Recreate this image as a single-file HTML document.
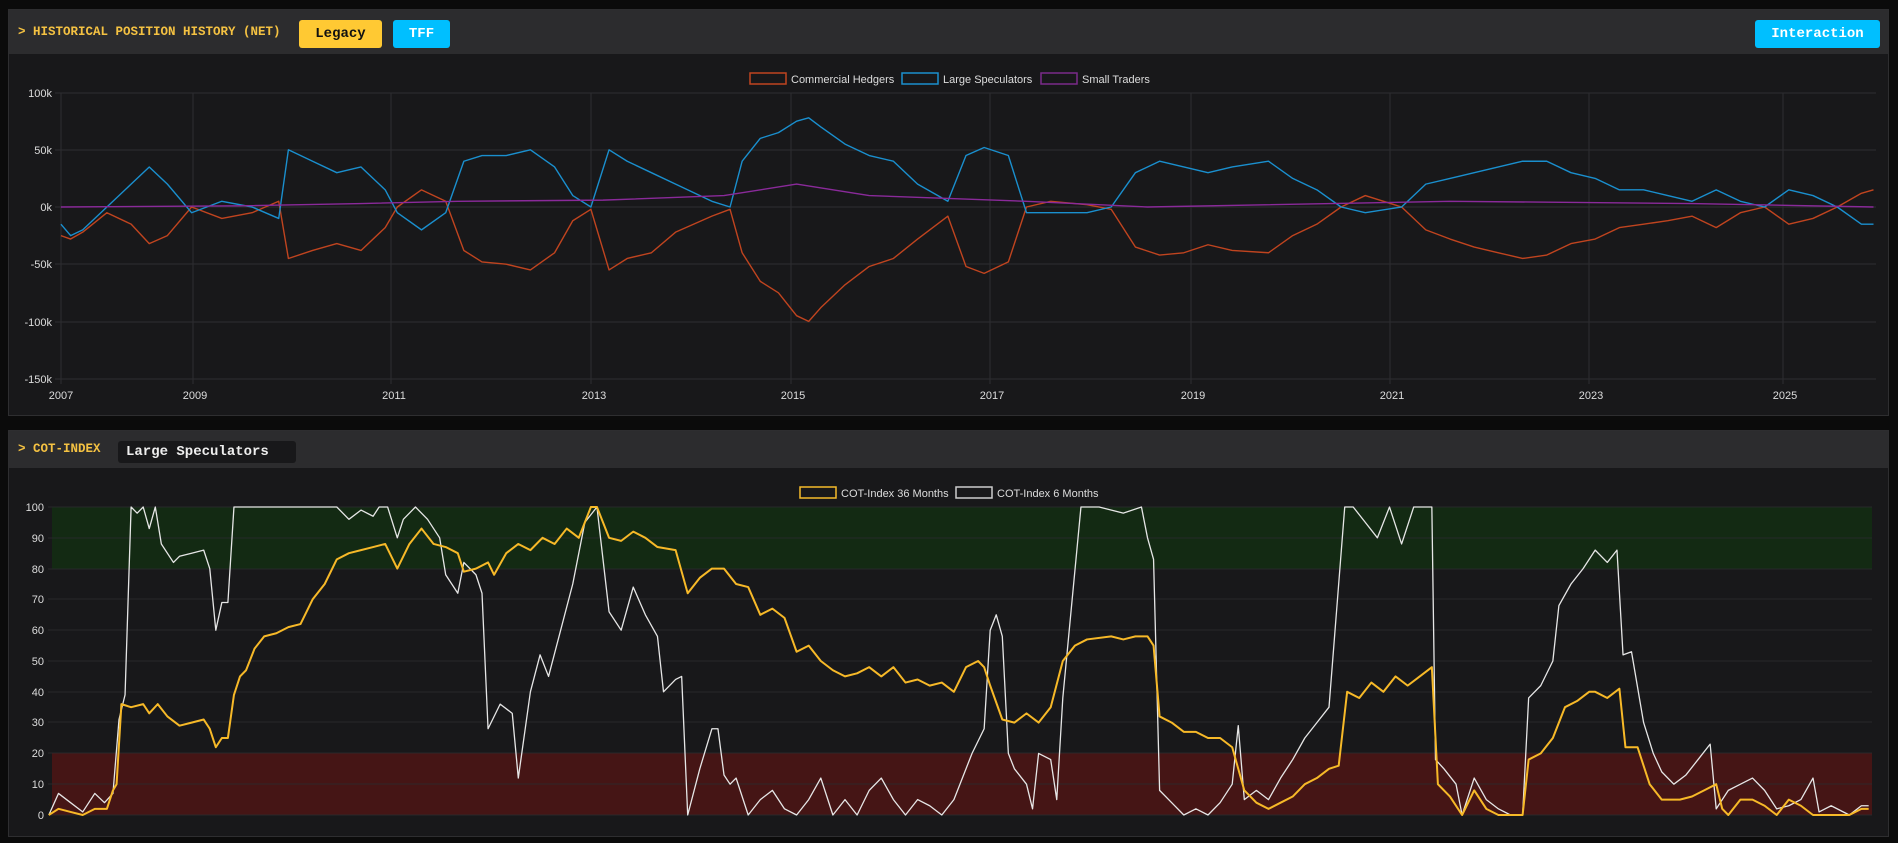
<!DOCTYPE html>
<html><head><meta charset="utf-8"><style>
body{margin:0;background:#0b0b0b;width:1898px;height:843px;overflow:hidden;font-family:"Liberation Sans",sans-serif}
.p{position:absolute;left:8px;width:1881px;background:#18181a;border:1px solid #2e2e30;box-sizing:border-box}
.h{position:absolute;left:0;top:0;right:0;background:#2c2c2e}
.t{position:absolute;font-family:"Liberation Mono",monospace;font-weight:bold;color:#f5c242;font-size:12.5px}
.b{position:absolute;font-family:"Liberation Mono",monospace;font-weight:bold;font-size:14px;border-radius:3px;text-align:center}
svg{position:absolute;left:0;top:0}
</style></head><body>
<div class="p" style="top:9px;height:407px"><div class="h" style="height:44px">
<div class="t" style="left:9px;top:15px">&gt; HISTORICAL POSITION HISTORY (NET)</div>
<div class="b" style="left:290px;top:10px;width:83px;height:28px;line-height:28px;background:#ffc933;color:#111">Legacy</div>
<div class="b" style="left:384px;top:10px;width:57px;height:28px;line-height:28px;background:#00bfff;color:#fff">TFF</div>
<div class="b" style="left:1746px;top:10px;width:125px;height:28px;line-height:28px;background:#00bfff;color:#fff">Interaction</div>
</div></div>
<div class="p" style="top:430px;height:407px"><div class="h" style="height:37px">
<div class="t" style="left:9px;top:11px">&gt; COT-INDEX</div>
<div class="b" style="left:109px;top:10px;width:178px;height:22px;line-height:22px;background:#18181a;color:#eee;text-align:left;padding-left:8px;box-sizing:border-box">Large Speculators</div>
</div></div>
<svg width="1898" height="843" font-family="Liberation Sans" font-size="11" fill="#ddd">
<g stroke="#2e2e31" stroke-width="1">
<line x1="55" x2="1876" y1="93" y2="93"/><line x1="55" x2="1876" y1="150" y2="150"/><line x1="55" x2="1876" y1="207" y2="207"/><line x1="55" x2="1876" y1="264" y2="264"/><line x1="55" x2="1876" y1="322" y2="322"/><line x1="55" x2="1876" y1="379" y2="379"/>
<line x1="61" x2="61" y1="93" y2="384"/><line x1="193" x2="193" y1="93" y2="384"/><line x1="391" x2="391" y1="93" y2="384"/><line x1="591" x2="591" y1="93" y2="384"/><line x1="791" x2="791" y1="93" y2="384"/><line x1="990" x2="990" y1="93" y2="384"/><line x1="1191" x2="1191" y1="93" y2="384"/><line x1="1390" x2="1390" y1="93" y2="384"/><line x1="1589" x2="1589" y1="93" y2="384"/><line x1="1783" x2="1783" y1="93" y2="384"/>
</g>
<g text-anchor="end"><text x="52" y="97">100k</text><text x="52" y="154">50k</text><text x="52" y="211">0k</text><text x="52" y="268">-50k</text><text x="52" y="326">-100k</text><text x="52" y="383">-150k</text></g>
<g text-anchor="middle"><text x="61" y="399">2007</text><text x="195" y="399">2009</text><text x="394" y="399">2011</text><text x="594" y="399">2013</text><text x="793" y="399">2015</text><text x="992" y="399">2017</text><text x="1193" y="399">2019</text><text x="1392" y="399">2021</text><text x="1591" y="399">2023</text><text x="1785" y="399">2025</text></g>
<rect x="750" y="73" width="36" height="11" fill="none" stroke="#c0441f" stroke-width="1.5"/><text x="791" y="83">Commercial Hedgers</text>
<rect x="902" y="73" width="36" height="11" fill="none" stroke="#1a8fce" stroke-width="1.5"/><text x="943" y="83">Large Speculators</text>
<rect x="1041" y="73" width="36" height="11" fill="none" stroke="#7a2a8a" stroke-width="1.5"/><text x="1082" y="83">Small Traders</text>
<g transform="translate(-2,207) scale(1.21,-1.144)" fill="none" stroke-width="1.4" stroke-linejoin="round">
<polyline vector-effect="non-scaling-stroke" stroke="#c0441f" points="52,-25 60,-28 70,-22 90,-5 110,-15 125,-32 140,-25 160,0 185,-10 210,-5 232,5 240,-45 260,-38 280,-32 300,-38 320,-18 330,0 350,15 370,5 385,-38 400,-48 420,-50 440,-55 460,-40 475,-12 490,-2 505,-55 520,-45 540,-40 560,-22 590,-8 605,-2 615,-40 630,-65 645,-75 660,-95 670,-100 680,-88 700,-68 720,-52 740,-45 760,-28 785,-8 800,-52 815,-58 835,-48 850,0 870,5 900,2 920,-2 940,-35 960,-42 980,-40 1000,-33 1020,-38 1050,-40 1070,-25 1090,-15 1110,0 1130,10 1160,0 1180,-20 1200,-28 1220,-35 1240,-40 1260,-45 1280,-42 1300,-32 1320,-28 1340,-18 1360,-15 1380,-12 1400,-8 1420,-18 1440,-5 1460,0 1480,-15 1500,-10 1520,0 1540,12 1550,15"/>
<polyline vector-effect="non-scaling-stroke" stroke="#1a8fce" points="52,-15 60,-25 70,-20 90,0 110,20 125,35 140,20 160,-5 185,5 210,0 232,-10 240,50 260,40 280,30 300,35 320,15 330,-5 350,-20 370,-5 385,40 400,45 420,45 440,50 460,35 475,10 490,0 505,50 520,40 540,30 560,20 590,5 605,0 615,40 630,60 645,65 660,75 670,78 680,70 700,55 720,45 740,40 760,20 785,5 800,45 815,52 835,45 850,-5 870,-5 900,-5 920,0 940,30 960,40 980,35 1000,30 1020,35 1050,40 1070,25 1090,15 1110,0 1130,-5 1160,0 1180,20 1200,25 1220,30 1240,35 1260,40 1280,40 1300,30 1320,25 1340,15 1360,15 1380,10 1400,5 1420,15 1440,5 1460,0 1480,15 1500,10 1520,0 1540,-15 1550,-15"/>
<polyline vector-effect="non-scaling-stroke" stroke="#8a2a9a" points="52,0 200,1 300,3 380,5 500,6 600,10 660,20 720,10 850,5 950,0 1200,5 1400,3 1550,0"/>
</g>
<rect x="52" y="507" width="1820" height="62" fill="#132a13"/>
<rect x="52" y="753" width="1820" height="62" fill="#451515"/>
<g stroke="#2b2b2e" stroke-width="1" opacity="0.8">
<line x1="48" x2="1872" y1="507" y2="507"/><line x1="48" x2="1872" y1="538" y2="538"/><line x1="48" x2="1872" y1="569" y2="569"/><line x1="48" x2="1872" y1="599" y2="599"/><line x1="48" x2="1872" y1="630" y2="630"/><line x1="48" x2="1872" y1="661" y2="661"/><line x1="48" x2="1872" y1="692" y2="692"/><line x1="48" x2="1872" y1="722" y2="722"/><line x1="48" x2="1872" y1="753" y2="753"/><line x1="48" x2="1872" y1="784" y2="784"/><line x1="48" x2="1872" y1="815" y2="815"/>
</g>
<g text-anchor="end"><text x="44" y="511">100</text><text x="44" y="542">90</text><text x="44" y="573">80</text><text x="44" y="603">70</text><text x="44" y="634">60</text><text x="44" y="665">50</text><text x="44" y="696">40</text><text x="44" y="726">30</text><text x="44" y="757">20</text><text x="44" y="788">10</text><text x="44" y="819">0</text></g>
<rect x="800" y="487" width="36" height="11" fill="none" stroke="#f5bb2a" stroke-width="1.5"/><text x="841" y="497">COT-Index 36 Months</text>
<rect x="956" y="487" width="36" height="11" fill="none" stroke="#ccc" stroke-width="1.5"/><text x="997" y="497">COT-Index 6 Months</text>
<g transform="translate(-2,815) scale(1.21,-3.08)" fill="none" stroke-linejoin="round">
<polyline vector-effect="non-scaling-stroke" stroke="#e6e6e6" stroke-width="1.3" points="42,0 50,7 60,4 70,1 80,7 88,4 95,7 100,31 105,39 110,100 115,98 120,100 125,93 130,100 135,88 145,82 150,84 160,85 170,86 175,80 180,60 185,69 190,69 195,100 230,100 260,100 280,100 290,96 300,99 310,97 315,100 322,100 330,90 335,96 345,100 355,96 365,90 370,78 380,72 385,82 395,78 400,72 405,28 415,36 425,33 430,12 440,40 448,52 455,45 465,60 475,75 485,95 495,100 505,66 515,60 525,74 535,65 545,58 550,40 560,44 565,45 570,0 580,15 590,28 595,28 600,13 605,10 610,12 620,0 630,5 640,8 650,2 660,0 670,5 680,12 690,0 700,5 710,0 720,8 730,12 740,5 750,0 760,5 770,3 780,0 790,5 795,10 805,20 815,28 820,60 825,65 830,58 835,20 840,15 850,10 855,2 860,20 870,18 875,5 880,38 895,100 910,100 930,98 945,100 950,90 955,83 960,8 970,4 980,0 990,2 1000,0 1010,4 1020,10 1025,29 1030,5 1040,8 1050,5 1060,12 1070,18 1080,25 1090,30 1100,35 1108,75 1113,100 1120,100 1130,95 1140,90 1150,100 1160,88 1170,100 1185,100 1188,18 1195,15 1205,10 1210,0 1220,12 1230,5 1240,2 1250,0 1260,0 1265,38 1275,42 1285,50 1290,68 1300,75 1310,80 1320,86 1330,82 1338,86 1343,52 1350,53 1360,30 1368,20 1375,14 1385,10 1395,13 1405,18 1415,23 1420,2 1430,8 1440,10 1450,12 1460,8 1470,2 1480,3 1490,5 1500,12 1505,1 1515,3 1530,0 1540,3 1546,3"/>
<polyline vector-effect="non-scaling-stroke" stroke="#f7b928" stroke-width="2" points="42,0 50,2 60,1 70,0 80,2 90,2 95,8 98,10 102,36 110,35 120,36 125,33 132,36 140,32 150,29 160,30 170,31 175,28 180,22 185,25 190,25 195,39 200,45 205,47 212,54 220,58 230,59 240,61 250,62 260,70 270,75 280,83 290,85 300,86 310,87 320,88 330,80 340,88 350,93 360,88 370,87 380,85 385,79 395,80 405,82 410,78 420,85 430,88 440,86 450,90 460,88 470,93 480,90 490,100 495,100 505,90 515,89 525,92 535,90 545,87 560,86 570,72 580,77 590,80 600,80 610,75 620,74 630,65 640,67 650,64 660,53 670,55 680,50 690,47 700,45 710,46 720,48 730,45 740,48 750,43 760,44 770,42 780,43 790,40 800,48 810,50 815,48 820,42 830,31 840,30 850,33 860,30 870,35 880,50 890,55 900,57 920,58 930,57 940,58 950,58 955,55 960,32 970,30 980,27 990,27 1000,25 1010,25 1020,22 1030,8 1040,4 1050,2 1060,4 1070,6 1080,10 1090,12 1100,15 1108,16 1115,40 1125,38 1135,43 1145,40 1155,45 1165,42 1175,45 1185,48 1190,10 1200,6 1210,0 1220,8 1230,2 1240,0 1260,0 1265,18 1275,20 1285,25 1295,35 1305,37 1315,40 1320,40 1330,38 1340,41 1345,22 1355,22 1365,10 1375,5 1390,5 1400,6 1410,8 1420,10 1425,2 1430,0 1440,5 1450,5 1460,3 1470,0 1480,5 1490,3 1500,0 1510,0 1520,0 1530,0 1540,2 1546,2"/>
</g>
</svg>
</body></html>
